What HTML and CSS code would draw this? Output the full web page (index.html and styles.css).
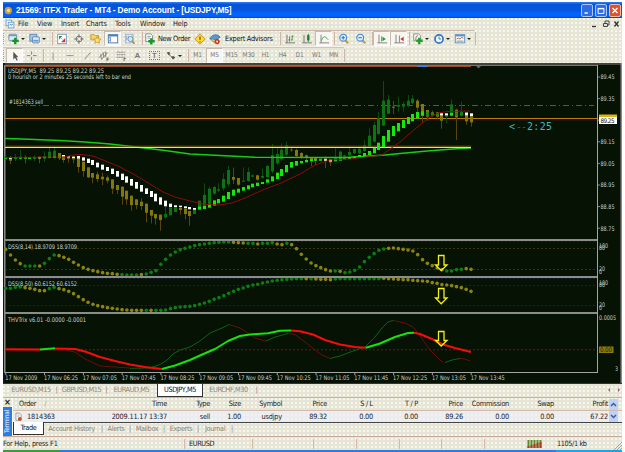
FILE: index.html
```html
<!DOCTYPE html>
<html lang="en">
<head>
<meta charset="utf-8">
<title>ITFX Trader</title>
<link rel="stylesheet" href="styles.css">
</head>
<body>
<svg class="defs" aria-hidden="true">
  <symbol id="newchart" viewBox="0 0 14 14"><rect x="1" y="1.500" width="9" height="7.500" rx="1" fill="#dce9f2" stroke="#5b86ae"/><path d="M1 3h9" stroke="#6f9bc8" stroke-width="1.500"/><path d="M8.500 5.500v7.500M5 9.200h7.500" stroke="#14942a" stroke-width="2.800"/></symbol>
  <symbol id="profiles" viewBox="0 0 14 14"><rect x="1" y="1.500" width="8" height="8" fill="#a8c8e8" stroke="#5a84b4"/><rect x="4" y="4.500" width="8" height="7" rx="1" fill="#d8e8f8" stroke="#4f7cae"/><path d="M5 9h6" stroke="#6a98cc" stroke-width="2"/></symbol>
  <symbol id="market" viewBox="0 0 14 14"><rect x="2" y="1.500" width="10" height="11" fill="#fff" stroke="#6d90b8"/><path d="M3.500 3.500h4l-4 4z" fill="#20903c"/><path d="M6 6l1.500 1.500M10.500 10.500v-4l-4 4z" fill="#d03028" stroke="#d03028" stroke-width=".5"/></symbol>
  <symbol id="target" viewBox="0 0 14 14"><circle cx="7" cy="7" r="3.400" fill="none" stroke="#6c6c6c"/><path d="M7 1.500v4M7 8.500v4M1.500 7h4M8.500 7h4" stroke="#555"/></symbol>
  <symbol id="star" viewBox="0 0 14 14"><path d="M1 2h4l1 1h4v5H1z" fill="#f4d566" stroke="#c99724"/><path d="M8.500 4l1.300 2.800 3 .3-2.200 2 .6 3-2.700-1.500-2.700 1.500.6-3-2.200-2 3-.3z" fill="#ffe36a" stroke="#bd8a20" stroke-width=".8"/></symbol>
  <symbol id="terminal" viewBox="0 0 14 14"><rect x="1.500" y="2" width="11" height="9.500" fill="#fff" stroke="#3d6ea8"/><path d="M1.500 3h11" stroke="#4a7cc0" stroke-width="2"/><path d="M4 4v7" stroke="#87a9cf" stroke-width="1.500"/><path d="M3 5v1M3 8v1" stroke="#c83838"/></symbol>
  <symbol id="tester" viewBox="0 0 14 14"><rect x="1.500" y="1.500" width="9" height="10" fill="#eef3f8" stroke="#9ab0c6"/><path d="M3 3v6M5 3v4M9 3v3" stroke="#87a7c4"/><circle cx="7.500" cy="7" r="3" fill="#d6e9f7" stroke="#5888b4"/><path d="M9.500 9.500l3 3" stroke="#b28b48" stroke-width="1.800"/></symbol>
  <symbol id="order" viewBox="0 0 14 14"><path d="M2 1h6l2 2v7H2z" fill="#f8f8f4" stroke="#7c8790"/><path d="M4 4h4M4 6h3" stroke="#8c98a2"/><path d="M8.500 6v7.500M5 9.700h7.500" stroke="#18982a" stroke-width="2.800"/></symbol>
  <symbol id="warn" viewBox="0 0 14 14"><path d="M7 1l6 6-6 6-6-6z" fill="#ffd93c" stroke="#bf9215"/><path d="M7 4v4M7 9.500v1.300" stroke="#7b5800" stroke-width="1.500"/></symbol>
  <symbol id="expert" viewBox="0 0 14 14"><path d="M1 7c1-5 9-7 12-2l-5 3z" fill="#5b9ad0" stroke="#3b74a8"/><path d="M3 7c0 4 5 5 6 2" fill="#f0c850" stroke="#a88224"/><circle cx="9.500" cy="10" r="3" fill="#cf3422"/><rect x="8.500" y="9" width="2" height="2" fill="#fff"/></symbol>
  <symbol id="bars" viewBox="0 0 14 14"><path d="M3.500 2v9.500H13M1.500 11.500h2" fill="none" stroke="#666"/><path d="M6.500 4v6M5 8h1.500M9.500 2.500v6M9.500 4H11M8 8h1.500" fill="none" stroke="#25923a"/></symbol>
  <symbol id="candle" viewBox="0 0 14 14"><path d="M3.500 2v9.500H13M1.500 11.500h2" fill="none" stroke="#666"/><rect x="7" y="2.500" width="3" height="6" fill="#20a038"/><path d="M8.500 1v9.500" stroke="#167028"/></symbol>
  <symbol id="line" viewBox="0 0 14 14"><path d="M3.500 2v9.500H13M1.500 11.500h2" fill="none" stroke="#777"/><path d="M4 9c2-6 4-6 8-1" fill="none" stroke="#35a048"/></symbol>
  <symbol id="zin" viewBox="0 0 14 14"><path d="M8 8l4 4" stroke="#c39a3a" stroke-width="2.200"/><circle cx="6" cy="5.500" r="4" fill="#dceefb" stroke="#4c8acb" stroke-width="1.300"/><path d="M6 3.500v4M4 5.500h4" stroke="#2f70b8" stroke-width="1.200"/></symbol>
  <symbol id="zout" viewBox="0 0 14 14"><path d="M8 8l4 4" stroke="#c39a3a" stroke-width="2.200"/><circle cx="6" cy="5.500" r="4" fill="#dceefb" stroke="#4c8acb" stroke-width="1.300"/><path d="M4 5.500h4" stroke="#2f70b8" stroke-width="1.200"/></symbol>
  <symbol id="scroll" viewBox="0 0 14 14"><path d="M3.500 2v9.500H13M1.500 11.500h2M6.500 4v6" fill="none" stroke="#777"/><path d="M7.500 4.500v5l4-2.500z" fill="#249a38"/></symbol>
  <symbol id="shift" viewBox="0 0 14 14"><path d="M3.500 2v9.500H13M1.500 11.500h2M7.500 3v8" fill="none" stroke="#777"/><path d="M12.500 4.500v5l-4-2.500z" fill="#c93a24"/></symbol>
  <symbol id="indic" viewBox="0 0 14 14"><path d="M2 1h6l2 2v6H2z" fill="#f4f4f0" stroke="#888"/><path d="M7 3c-3 0-2 4-3 5" fill="none" stroke="#777"/><path d="M8.500 5.500v7.500M5 9h7.500" stroke="#1aa02b" stroke-width="2.800"/></symbol>
  <symbol id="clock" viewBox="0 0 14 14"><circle cx="7" cy="7" r="4.700" fill="#eef5fc" stroke="#3877bc" stroke-width="2"/><path d="M7 4v3h2.500" fill="none" stroke="#4a6e96"/></symbol>
  <symbol id="template" viewBox="0 0 14 14"><rect x="1.500" y="2" width="11" height="9.500" fill="#f4f8fc" stroke="#5487bc"/><path d="M1.500 3h11" stroke="#5b91ce" stroke-width="2"/><path d="M3 7l2-1 2 1 2-2 2 1" fill="none" stroke="#c05040"/><path d="M3 9.500h8" stroke="#53a05c"/></symbol>
  <symbol id="cursor" viewBox="0 0 14 14"><path d="M5 2v9l2-2 2 3.500 1.200-.7L8.500 8.500H11z" fill="#555"/></symbol>
  <symbol id="cross" viewBox="0 0 14 14"><path d="M6.500 1.500v4M6.500 8v4M1 6.500h4M8 6.500h4.500" stroke="#777"/></symbol>
  <symbol id="vline" viewBox="0 0 14 14"><path d="M7 3v9" stroke="#888"/></symbol>
  <symbol id="hline" viewBox="0 0 14 14"><path d="M3 6.500h8" stroke="#888"/></symbol>
  <symbol id="trend" viewBox="0 0 14 14"><path d="M4 11l7-8" stroke="#777"/></symbol>
  <symbol id="channel" viewBox="0 0 14 14"><path d="M1 9l7-7M4 11l7-8M3 5l1 6M6 3l1 6M9 2v6" stroke="#777"/><path d="M10.500 9v4M10.500 9.500h2M10.500 11h2" stroke="#555" stroke-width=".9"/></symbol>
  <symbol id="fib" viewBox="0 0 14 14"><path d="M2 2.500h10M2 5.500h10M2 8.500h10" stroke="#777" stroke-dasharray="2 .6"/><path d="M10.500 9.500v3.500M10.500 10h2" stroke="#555"/></symbol>
  <symbol id="arrows" viewBox="0 0 14 14"><path d="M2 3l3-1 1 3-2 1zM7 8l3-1 2 2-3 2z" fill="#555"/><path d="M4 5l4 3" stroke="#666"/></symbol>
  <symbol id="globe" viewBox="0 0 14 14"><circle cx="7" cy="7" r="6" fill="#3a5568"/><path d="M7 1a6 6 0 0 0 0 12 6 6 0 0 0 3-11" fill="#c99c42"/><circle cx="7" cy="7" r="2.600" fill="#f2dc94"/></symbol>
  <symbol id="charticon" viewBox="0 0 14 14"><rect x="1.500" y="1.500" width="8" height="8" fill="#f5fbff" stroke="#4d8fce"/><rect x="4.500" y="4.500" width="8" height="8" fill="#e8f4ff" stroke="#4d8fce"/><path d="M6 9l2-2 1 2 2-2" fill="none" stroke="#3376b8"/></symbol>
  <symbol id="sellorder" viewBox="0 0 14 14"><path d="M3 1h6l2 2v9H3z" fill="#fff" stroke="#777"/><circle cx="9" cy="10" r="3" fill="#c84b26"/><path d="M5 4h4M5 6h3" stroke="#999"/></symbol>
</svg>

<div class="window">
  <header class="titlebar">
    <svg class="app-icon"><use href="#globe"/></svg>
    <h1>21569: ITFX Trader - MT4 - Demo Account - [USDJPY,M5]</h1>
    <div class="win-buttons">
      <svg class="wb" viewBox="0 0 12 13"><path d="M3 9.500h4" stroke="#fff" stroke-width="2"/></svg>
      <svg class="wb" viewBox="0 0 12 13"><path d="M2.500 4h7v6h-7zM2.500 4.500h7" stroke="#fff" fill="none" stroke-width="1.200"/></svg>
      <svg class="wb close" viewBox="0 0 12 13"><path d="M3 3.500l6 6M9 3.500l-6 6" stroke="#fff" stroke-width="1.700"/></svg>
    </div>
  </header>

  <nav class="menubar">
    <svg class="menu-icon"><use href="#charticon"/></svg>
    <span class="m-file">File</span><span class="m-view">View</span><span class="m-insert">Insert</span><span class="m-charts">Charts</span><span class="m-tools">Tools</span><span class="m-window">Window</span><span>Help</span>
    <svg class="mdi" viewBox="0 0 32 10"><path d="M2 7.500h4" stroke="#333" stroke-width="1.300"/><path d="M13.500 4.500h4v3h-4zM15 4V2h4v4h-1" fill="none" stroke="#444"/><path d="M24.500 2.500l4 5M28.500 2.500l-4 5" stroke="#333" stroke-width="1.300"/></svg>
  </nav>

  <div class="toolbar standard">
    <i class="grip"></i>
    <button class="drop"><svg><use href="#newchart"/></svg></button>
    <button class="drop"><svg><use href="#profiles"/></svg></button>
    <i class="sep s5"></i>
    <button><svg><use href="#market"/></svg></button>
    <button><svg><use href="#target"/></svg></button>
    <button><svg><use href="#star"/></svg></button>
    <button class="on"><svg><use href="#terminal"/></svg></button>
    <button><svg><use href="#tester"/></svg></button>
    <i class="sep s5"></i>
    <button class="wide-order"><svg><use href="#order"/></svg><span>New Order</span></button>
    <button><svg><use href="#warn"/></svg></button>
    <button class="wide-expert"><svg><use href="#expert"/></svg><span>Expert Advisors</span></button>
    <i class="sep s5"></i>
    <button><svg><use href="#bars"/></svg></button>
    <button><svg><use href="#candle"/></svg></button>
    <button class="on"><svg><use href="#line"/></svg></button>
    <i class="sep s3"></i>
    <button><svg><use href="#zin"/></svg></button>
    <button><svg><use href="#zout"/></svg></button>
    <i class="sep s4"></i>
    <button class="on"><svg><use href="#scroll"/></svg></button>
    <button class="on"><svg><use href="#shift"/></svg></button>
    <i class="sep s3"></i>
    <button class="drop"><svg><use href="#indic"/></svg></button>
    <button class="drop"><svg><use href="#clock"/></svg></button>
    <button class="drop"><svg><use href="#template"/></svg></button>
    <i class="sep s3"></i>
  </div>

  <div class="toolbar drawing">
    <i class="grip"></i>
    <button class="on"><svg><use href="#cursor"/></svg></button>
    <button><svg><use href="#cross"/></svg></button>
    <i class="sep s4"></i>
    <button><svg><use href="#vline"/></svg></button>
    <button><svg><use href="#hline"/></svg></button>
    <button><svg><use href="#trend"/></svg></button>
    <button><svg><use href="#channel"/></svg></button>
    <button><svg><use href="#fib"/></svg></button>
    <button class="glyph">A</button>
    <button class="glyph"><b class="boxed">T</b></button>
    <button class="drop"><svg><use href="#arrows"/></svg></button>
    <i class="sep s5"></i>
    <button class="tf">M1</button><button class="tf on">M5</button><button class="tf">M15</button><button class="tf">M30</button><button class="tf">H1</button><button class="tf">H4</button><button class="tf">D1</button><button class="tf">W1</button><button class="tf">MN</button>
    <i class="sep s3"></i>
  </div>

  <svg id="chart" class="chart" viewBox="3 63 619 320"></svg>

  <div class="chart-tabs">
    <span>EURUSD,M15</span><i>|</i><span>GBPUSD,M15</span><i>|</i><span>EURAUD,M5</span><span class="active">USDJPY,M5</span><span class="last">EURCHF,M30</span><i>|</i>
    <svg class="tab-nav" viewBox="0 0 16 8"><path d="M4 2L2 4l2 2zM12 2l2 2-2 2z" fill="#a06a60"/></svg>
  </div>

  <section class="terminal">
    <aside class="side"><b>×</b><div><span>Terminal</span></div></aside>
    <div class="trade">
      <div class="row head">
        <span class="left">Order<em>/</em></span><span>Time</span><span>Type</span><span>Size</span><span>Symbol</span><span>Price</span><span>S / L</span><span>T / P</span><span>Price</span><span>Commission</span><span>Swap</span><span>Profit</span>
        <svg viewBox="0 0 9 11"><rect width="9" height="11" rx="1" fill="#bed2f7"/><path d="M2 7l2.500-2.500L7 7" fill="none" stroke="#435b91" stroke-width="1.500"/></svg>
      </div>
      <div class="row data">
        <span class="left"><svg class="rowicon"><use href="#sellorder"/></svg>1814363</span><span>2009.11.17 13:37</span><span>sell</span><span>1.00</span><span>usdjpy</span><span>89.32</span><span>0.00</span><span>0.00</span><span>89.26</span><span>0.00</span><span>0.00</span><span>67.22</span>
        <svg viewBox="0 0 9 11"><rect width="9" height="11" rx="1" fill="#bed2f7"/><path d="M2 4l2.500 2.500L7 4" fill="none" stroke="#435b91" stroke-width="1.500"/></svg>
      </div>
      <div class="term-tabs">
        <span class="active">Trade</span><span class="t-hist">Account History</span><i>|</i><span class="t-alert">Alerts</span><i>|</i><span class="t-mail">Mailbox</span><i>|</i><span class="t-exp">Experts</span><i>|</i><span class="t-jour">Journal</span><i>|</i>
      </div>
    </div>
  </section>

  <footer class="status">
    <span class="help">For Help, press F1</span><span class="sym">EURUSD</span><span class="c1"></span><span class="c2"></span><span class="c3"></span><span class="c4"></span><span class="c5"></span>
    <span class="conn"><svg viewBox="0 0 15 8"><path d="M1.500 0v8M4.500 0v8M7.500 0v8M10.500 0v8M13.500 0v8" stroke="#5b8b22" stroke-width="2"/><path d="M1.500 6v2M4.500 5v3M7.500 4v4M10.500 3v5M13.500 2v6" stroke="#b03a28" stroke-width="2"/></svg>1105/1 kb</span>
    <svg class="resize" viewBox="0 0 8 8"><path d="M0 8l8-8M3 8l5-5M6 8l2-2" stroke="#aaa493"/></svg>
  </footer>
  <div class="taskbar"><i class="start"></i><i class="tasks"></i><i class="tray"></i></div>
</div>
<script src="chart.js"></script>
</body>
</html>
```

FILE: styles.css
```css
* { box-sizing: border-box; }
body { margin: 0; background: #fff; font: 7.3px/1 "DejaVu Sans Condensed", "DejaVu Sans", sans-serif; color: #222; overflow: hidden; }
svg { display: block; flex: none; }
i, em { font-style: normal; }
.defs { width: 0; height: 0; position: absolute; }
.window {
  width: 619px; height: 450px; margin: 2px 0 0 3px; display: flex; flex-direction: column;
  background-color: #e5e4d9;
  background-image: radial-gradient(circle at 1px 1px, #fffdf0 .6px, transparent 1px), radial-gradient(circle at 3px 3px, #f9f5ac .5px, transparent .9px);
  background-size: 4px 4px, 8px 8px;
}
.titlebar { height: 16px; flex: none; display: flex; align-items: center; background: linear-gradient(#2c82f8 0, #0653d8 15%, #0455e0 50%, #0565ff 75%, #0560f5 90%, #0340b8 100%); }
.app-icon { width: 9px; height: 9px; margin-left: 1px; }
.titlebar h1 { margin: 0 0 0 3px; color: #fff; font: bold 8.3px/1 "Liberation Sans", sans-serif; letter-spacing: -.13px; white-space: nowrap; width: 218px; }
.win-buttons { display: flex; gap: 2px; margin-left: auto; margin-right: 1px; }
.wb { width: 12px; height: 13px; border: 1px solid #a9c6f8; border-radius: 2px; background: #2f6be6; }
.wb.close { background: #dc532c; border-color: #f4b9a4; }
.menubar { height: 12px; flex: none; display: flex; align-items: center; padding-left: 2px; }
.menu-icon { width: 10px; height: 10px; margin-right: 3px; }
.menubar span { white-space: nowrap; letter-spacing: -.1px; }
.m-file { width: 19px; } .m-view { width: 24px; } .m-insert { width: 25px; } .m-charts { width: 29px; } .m-tools { width: 25px; } .m-window { width: 33px; }
.mdi { width: 32px; height: 10px; margin-left: auto; }
.toolbar { flex: none; display: flex; align-items: center; border-top: 1px solid #c9b9ad; }
.toolbar.standard { height: 17px; width: 471px; border-bottom: 1px solid #f3f1ea; }
.toolbar.drawing { height: 16px; width: 341px; border-top-color: #cfc7bd; }
.grip { width: 3px; flex: none; height: 11px; border-left: 1px dotted #a39c8d; }
.toolbar button { width: 17px; height: 15px; flex: none; display: flex; align-items: center; justify-content: center; padding: 0; border: 1px solid transparent; background: none; font: inherit; color: #666; }
.toolbar button.on { background: #f7f6f1; border-color: #c4bcb0; border-right-color: #fff; border-bottom-color: #fff; }
.toolbar button svg { width: 12px; height: 12px; }
.toolbar button.drop { width: 21px; justify-content: flex-start; padding-left: 1px; }
.drop::after { content: ""; border: 2px solid transparent; border-top: 2px solid #222; border-bottom: 0; margin-left: 1px; }
.sep { flex: none; height: 13px; border-right: 1px solid #cfb4a8; }
.s3 { width: 3px; } .s4 { width: 4px; } .s5 { width: 5px; }
.toolbar button.wide-order { width: 48px; justify-content: flex-start; color: #111; white-space: nowrap; padding-left: 0; }
.toolbar button.wide-expert { width: 68px; justify-content: flex-start; color: #111; white-space: nowrap; }
.wide-order span { margin-left: 2px; letter-spacing: -.32px; }
.wide-expert span { margin-left: 4px; letter-spacing: -.25px; }
.toolbar button.tf { font-size: 6.5px; letter-spacing: -.2px; color: #777; }
.toolbar button.glyph { font: bold 8px/1 "Liberation Sans", sans-serif; color: #777; }
.boxed { border: 1px dotted #777; padding: 0 2px; font-size: 7px; }
.chart { width: 619px; height: 320px; background: #051204; }
.t { fill: #d0d4d0; font: 6.3px "DejaVu Sans Condensed", "DejaVu Sans", sans-serif; }
.mono { fill: #38bcc8; font: 10px "DejaVu Sans Mono", monospace; }
.dash { fill: #1c6478; }
.chart-tabs { height: 13px; flex: none; display: flex; align-items: center; border-top: 1px solid #333; color: #8a877d; white-space: nowrap; }
.chart-tabs span { width: 45px; text-align: center; letter-spacing: -.42px; }
.chart-tabs span:first-child { margin-left: 5px; width: 46px; }
.chart-tabs i { width: 5px; text-align: center; }
.chart-tabs .active { width: 46px; height: 13px; line-height: 11px; margin-left: 3px; background: #fff; border: 1px solid #333; border-top: 0; color: #111; }
.chart-tabs .last { width: 51px; }
.tab-nav { width: 16px; height: 8px; margin-left: auto; }
.terminal { height: 39px; margin-top: 1px; flex: none; display: flex; border-top: 1px solid #bfb3a6; }
.side { width: 9px; flex: none; display: flex; flex-direction: column; }
.side b { height: 9px; font-size: 9px; text-align: center; line-height: 8px; }
.side div { flex: 1; display: flex; align-items: center; justify-content: center; background: #2b7de0; color: #fff; }
.side span { writing-mode: vertical-rl; transform: rotate(180deg); font-size: 6.5px; letter-spacing: -.2px; }
.trade { flex: 1; border-left: 1px solid #fff; }
.row { display: grid; grid-template-columns: 70px 84px 43px 31px 41px 45px 46px 45px 45px 46px 45px 54px 10px; align-items: center; white-space: nowrap; }
.row > span { text-align: right; letter-spacing: -.28px; }
.row > svg { width: 9px; height: 11px; justify-self: end; }
.row .left { display: flex; align-items: center; text-align: left; }
.head { height: 13px; border-bottom: 1px solid #d4b8a8; }
.head .left { padding-left: 6px; }
.head em { color: #a9a599; margin-left: 8px; }
.data { height: 12px; background: rgba(236, 240, 250, .65); border-bottom: 1px solid #444; }
.data > span { letter-spacing: -.2px; }
.rowicon { width: 9px; height: 10px; margin: 0 4px 0 1px; }
.term-tabs { height: 12px; display: flex; align-items: center; color: #8a877d; white-space: nowrap; }
.term-tabs .active { width: 31px; height: 13px; margin-top: -1px; line-height: 11px; text-align: center; background: #fff; border: 1px solid #333; border-top: 0; color: #111; }
.term-tabs i { width: 6px; text-align: center; }
.term-tabs span { text-align: center; letter-spacing: -.35px; }
.t-hist { width: 55px; } .t-alert { width: 22px; } .t-mail { width: 28px; } .t-exp { width: 28px; } .t-jour { width: 28px; }
.status { height: 14px; flex: none; display: flex; align-items: center; border-top: 1px solid #c9a99a; white-space: nowrap; }
.status span { height: 10px; line-height: 10px; border-right: 1px solid #d5b7ab; }
.status .help { width: 182px; letter-spacing: -.25px; }
.status .sym { width: 68px; padding-left: 4px; letter-spacing: -.4px; }
.status .c1 { width: 61px; } .status .c2 { width: 43px; } .status .c3 { width: 43px; } .status .c4 { width: 42px; } .status .c5 { width: 43px; }
.status .conn { flex: 1; display: flex; align-items: center; gap: 15px; padding-left: 42px; border: 0; letter-spacing: -.4px; }
.conn svg { width: 15px; height: 8px; }
.resize { width: 8px; height: 8px; align-self: flex-end; }
.taskbar { flex: 1; display: flex; }
.start { width: 57px; background: #3c9c3c; }
.tasks { flex: 1; background: #2f7be4; }
.tray { width: 66px; background: #18a4ee; }
```

FILE: chart.js
```js
const svg = document.getElementById('chart');
const NS = 'http://www.w3.org/2000/svg';
const X0 = 5.7, STEP = 4.847;
const xAt = i => X0 + STEP * i;

function el(name, attrs, text) {
  const e = document.createElementNS(NS, name);
  for (const k in attrs) e.setAttribute(k, attrs[k]);
  if (text) e.textContent = text;
  svg.appendChild(e);
}
function rect(x, y, w, h, fill) { el('rect', { x, y, width: w, height: h, fill }); }
function hline(x1, x2, y, stroke, w, dash) {
  el('path', { d: `M${x1} ${y}H${x2}`, stroke, 'stroke-width': w || 1, 'stroke-dasharray': dash || 'none' });
}
function poly(points, stroke, w) {
  el('polyline', { points, fill: 'none', stroke, 'stroke-width': w, 'stroke-linejoin': 'round' });
}
function label(x, y, s, len) {
  el('text', { x, y, class: 't', textLength: len, lengthAdjust: 'spacingAndGlyphs' }, s);
}

// frame and pane borders
rect(3, 63, 619, 2, '#45433e');
rect(3, 63, 2, 320, '#151515');
rect(4, 65, 1.500, 308, '#8c8c88');
rect(620.500, 63, 1.500, 320, '#8c8c88');
hline(5, 598, 65.500, '#77736d');
hline(5, 471, 66.500, '#9c4c1c');
hline(417, 428, 66.500, '#3f7fe0');
el('path', { d: 'M476 66h5l-2.500 2.500z', fill: '#666' });

// levels
hline(17, 594, 105.500, '#1f7c24', 1, '6 3 1 3');
hline(5, 597, 118.500, '#bd7a10', 1.200);
hline(5, 597, 120, '#2c1606', .8);
hline(5, 597, 248.500, '#44400f', .8, '2 2');
hline(5, 597, 269.500, '#44400f', .8, '2 2');
hline(5, 597, 285.500, '#541414', .8, '2 2');
hline(5, 597, 305.500, '#541414', .8, '2 2');
hline(5, 597, 349.800, '#6c1c1c', 1, '2 2');
hline(5, 597, 241.500, '#202050', .8, '2 2');
hline(5, 597, 278.500, '#202050', .8, '2 2');

// price bars: type, body top, body bottom, high, low (thirds of a pixel below y=80)
const bars = `g230,238,230,238 o234,242,228,252 g232,236,222,244 g230,236,210,240 o231,236,226,250 g233,237,233,237 g231,235,226,244 o230,235,230,250
g228,233,214,246 g215,230,204,236 g212,229,200,236 o219,235,219,240 o226,240,226,248 o229,236,229,248 o230,238,230,250 o235,261,235,278
o245,273,245,290 o262,292,262,294 o279,293,279,310 o283,297,275,306 o290,298,278,315 o292,302,286,310 o298,326,298,342 o315,330,315,342
o320,350,320,374 o332,358,332,374 o347,375,347,392 o358,375,358,388 o365,378,355,390 o371,398,371,427 o390,407,390,430 o402,415,402,434
o404,420,404,452 g402,412,380,415 g382,406,382,406 g377,396,377,396 o383,390,380,404 o385,402,385,418 o393,408,393,437 g385,402,385,402
g362,390,362,390 g345,375,310,378 g326,370,320,370 g321,341,318,345 g328,332,310,336 g297,325,280,332 g270,313,258,320 o291,299,263,312
o294,314,294,318 g302,305,262,306 g276,303,262,306 g286,290,284,292 o286,299,284,302 g288,293,265,296 g258,291,254,294 g225,274,192,280
g222,250,205,254 g209,237,190,242 g196,224,185,228 o209,211,200,215 o210,228,206,234 o219,232,216,236 o226,234,224,240 o233,240,233,258
o234,242,234,255 g235,242,235,242 o235,242,230,264 o237,247,237,258 g232,240,205,244 g215,237,212,240 g226,230,224,234 g216,225,198,228
g207,220,206,222 g206,220,200,222 g196,213,180,216 g167,200,145,202 g135,185,125,188 g114,162,96,164 g62,137,3,138 g59,101,45,102
o80,83,63,102 g77,80,50,96 g72,80,65,95 g62,76,45,82 g56,70,45,72 o62,83,57,97 o72,108,72,128 o90,110,90,122
o97,106,92,110 o97,110,96,118 o104,122,100,146 g104,110,100,130 g73,105,58,110 o89,112,86,180 g95,107,65,110 o97,124,97,134 o108,127,108,140`.split(/\s+/);
bars.forEach((b, i) => {
  const [t, bt, hi, lo] = b.slice(1).split(',').map(n => 80 + n / 3);
  const up = b[0] === 'g', x = Math.round(xAt(i) - .5);
  rect(x, hi, 1, lo - hi, up ? '#0d4a10' : '#5b4310');
  rect(x - 1, t, 3, bt - t, up ? '#0b7411' : '#857609');
});

// moving averages
poly('5,138.500 22,139 60,140.500 85,142 110,144 140,147.500 165,150.500 190,154 220,155.500 255,157.200 345,157.500 385,155 400,153.500 430,150.800 460,148.500 471,148', '#18cc14', 1.400);
hline(5, 471, 146.200, '#7c5c0a');
hline(5, 471, 147.500, '#f5f014', 1.200);

// smoothed bars
const smooth = `g232,236 w233,236 g231,235 g232,236 g232,235 g232,236 g232,235 w232,235 g231,235 g230,234 g229,234 g229,234
w225,230 w229,232 w230,234 w228,236 w232,242 w236,249 w240,255 w248,262 w254,269 w261,273 w266,282 w273,290 w281,300 w289,308 w297,317 w306,326 w315,335 w325,342 w333,351 w341,364 w352,374 w362,379 w371,381 w376,381 w377,381 w379,384 w381,388 w384,389
g380,388 g377,387 g371,383 g361,377 g357,370 g347,365 g336,357 g329,347 g326,338 g321,332 g316,328 g311,322 g308,318 g306,312 g298,308 g289,304 g278,297 g267,288 g255,277 g246,263 g243,257 g243,250 g240,247 g238,244 g238,242 g238,242 w238,242 w240,244 g239,244 g236,242 g235,238 g231,237 g229,235 g225,231 g219,230 g213,225 g203,220 g188,210 g168,201 g150,185 g138,168 g129,154 g120,144 g111,132 g102,124 g96,115 g94,106 d97,108 d98,106 d99,107 w100,106 w100,106 g99,107 d98,107 d98,106 w98,106 w100,108`.split(/\s+/);
const smoothFill = { w: '#fff', g: '#16e80c', d: '#108a10' };
smooth.forEach((b, i) => {
  const [t, bt] = b.slice(1).split(',').map(n => 80 + n / 3);
  rect(Math.round(xAt(i) - .5) - 1, t, 3, bt - t, smoothFill[b[0]]);
});
poly('5,157.500 65,157 73,155 82,154.500 93,156 103,160 120,167 135,175 150,184 163,192 175,197 190,201 207,204.500 220,205 232,203 245,198 265,189 280,183.500 300,174 315,165 330,160 350,159 370,156.500 382,155 390,149 400,142 415,129 430,117 438,113 448,111.500 470,111', '#a00808', .9);

// oscillator dots: value and colour per bar (thirds of a pixel below y=236)
function dots(values, colours) {
  values.forEach((v, i) => el('circle', { cx: xAt(i), cy: 236 + v / 3, r: 1.800, fill: colours[i] === 'g' ? '#0c7e12' : '#8c8410' }));
}
const runs = s => s.replace(/([go])(\d+)/g, (_, c, n) => c.repeat(+n));
dots([40,57,72,83,90,90,90,90,82,68,57,59,64,70,79,87,95,100,104,107,110,112,113,115,116,117,117,117,116,114,109,104,85,70,57,48,41,37,33,29,26,24,22,20,19,18,18,19,20,21,22,22,24,22,22,20,24,26,22,26,38,55,69,81,89,95,101,105,105,106,110,108,103,93,77,64,53,43,39,37,36,38,40,42,45,56,71,82,89,96,101,105,105,101,100,98,100],
  runs('o4g3o1g3o13g4o1g18o3g2o1g3o2g1o9g1o1g9o12g4o1'));
dots([157,157,154,153,155,157,160,164,164,158,154,158,161,166,173,182,191,199,205,209,212,215,217,219,221,222,223,223,223,223,223,223,223,222,218,215,213,212,211,209,205,201,196,190,185,179,172,166,160,156,151,147,145,141,138,135,133,131,130,129,128,128,128,128,129,130,130,131,129,128,128,128,128,128,128,128,128,128,127,128,129,130,131,131,133,134,135,136,140,142,146,147,149,152,155,160,166],
  runs('g4o5g2o18g1o1g31o1g1o4g10o19'));

// trend oscillator
poly('5,350 65,350 75,352 85,359 100,366 130,368', '#7c0a0a', .9);
poly('130,368.300 150,368 160,364.500 167,360 173,354 180,350 190,347 200,341 210,333 222,328 229,324.500', '#0c6c12', .9);
poly('229,324.500 240,328 255,338 266,341', '#7c0a0a', .9);
poly('266,341 275,337 288,333.500', '#0c6c12', .9);
poly('288,333.500 295,334.500 305,342 315,350 322,355 330,358.500', '#7c0a0a', .9);
poly('330,358.500 340,356 353,351 365,347 375,337 382,328 388,322 393,320.500', '#0c6c12', .9);
poly('393,320.500 405,323 413,327 420,336 430,350 437,357 443,362.500', '#7c0a0a', .9);
poly('445,362.500 452,360 460,358.500', '#0c6c12', .9);
poly('460,358.500 465,359 470,361', '#7c0a0a', .9);
poly('5,349.300 40,349.500', '#f80c08', 2);
poly('40,349.500 55,348.300', '#14e40c', 2);
poly('55,348.500 75,349 85,351.500 100,357 115,361 130,364.500 145,367 162,369', '#f80c08', 2);
poly('162,369 175,365.500 190,360 200,355.500 215,349 228,341 240,336 250,334.500 268,333.200 280,330.800 291,330.500', '#14e40c', 2);
poly('291,330.500 300,331.200 313,334.500 325,340 340,344.500 355,347 366,347.800', '#f80c08', 2);
poly('366,347.800 380,343.500 395,337 408,333 414,332.800', '#14e40c', 2);
poly('414,332.800 420,334 432,339 443,344.500 455,348 471,352', '#f80c08', 2);

// marker arrows
[[255.500, 265, 270.500], [288.500, 298, 303.800], [331.500, 340.500, 346]].forEach(([a, b, c]) => {
  el('path', { d: `M438.500 ${a}h5.500V${b}h3L441.200 ${c} 435.500 ${b}h3z`, fill: 'none', stroke: '#f5f014', 'stroke-width': 1.300 });
});

// pane separators and price axis
rect(5, 239, 593, 2, '#8c8c88');
rect(5, 276, 593, 2, '#8c8c88');
rect(5, 312, 593, 2, '#8c8c88');
hline(5, 598, 372.500, '#a4a4a0');
rect(597, 65, 1, 308, '#a4a4a0');
['89.45', '89.35', '', '89.15', '89.05', '88.95', '88.85', '88.75'].forEach((s, i) => {
  const y = 77 + i * 21.600;
  hline(598, 600, y, '#a4a4a0', .8);
  if (s) label(600.500, y + 2.300, s, 14);
});
rect(599, 114.500, 18, 3, '#d8b810');
rect(599, 117, 18, 7, '#fff');
el('text', { x: 600.500, y: 122.700, class: 't', style: 'fill:#111', textLength: 14 }, '89.25');
label(599, 247.500, '100', 9); label(599, 250, '80', 6);
label(599, 271, '20', 6); label(599, 274, '0', 3);
label(599, 284.500, '100', 9); label(599, 287, '80', 6);
label(599, 307, '20', 6); label(599, 310, '0', 3);
label(599, 320, '0.0005', 17);
rect(599, 346.500, 14.500, 6.500, '#8c7d10');
el('text', { x: 600, y: 352, class: 't', style: 'fill:#221c00', textLength: 12 }, '0.00');
label(615, 371, '3', 3);

// time axis
['2009', '06:25', '07:05', '07:45', '08:25', '09:05', '09:45', '10:25', '11:05', '11:45', '12:25', '13:05', '13:45'].forEach((s, i) => {
  const x = 5.300 + i * 38.780;
  rect(x, 372, 1, 3, '#a4a4a0');
  label(x, 380.300, '17 Nov ' + s, i ? 34 : 32);
});

// captions
label(8, 73.300, 'USDJPY,M5 \u00a089.25 89.25 89.22 89.25', 96);
label(8, 79.200, '0 hourish or 2 minutes 25 seconds left to bar end', 123);
label(9, 104.300, '#1814363 sell', 34);
label(8, 249.300, 'DSS(8,14) 18.9709 18.9709', 69);
label(8, 286.300, 'DSS(8,50) 60.6152 60.6152', 69);
label(8, 322, 'THVTrix v6.01 -0.0000 -0.0001', 78);
el('text', { x: 509, y: 130, class: 'mono', textLength: 6 }, '<');
el('text', { x: 516, y: 130, class: 'mono dash', textLength: 11 }, '--');
el('text', { x: 527, y: 130, class: 'mono', textLength: 25 }, '2:25');
```
